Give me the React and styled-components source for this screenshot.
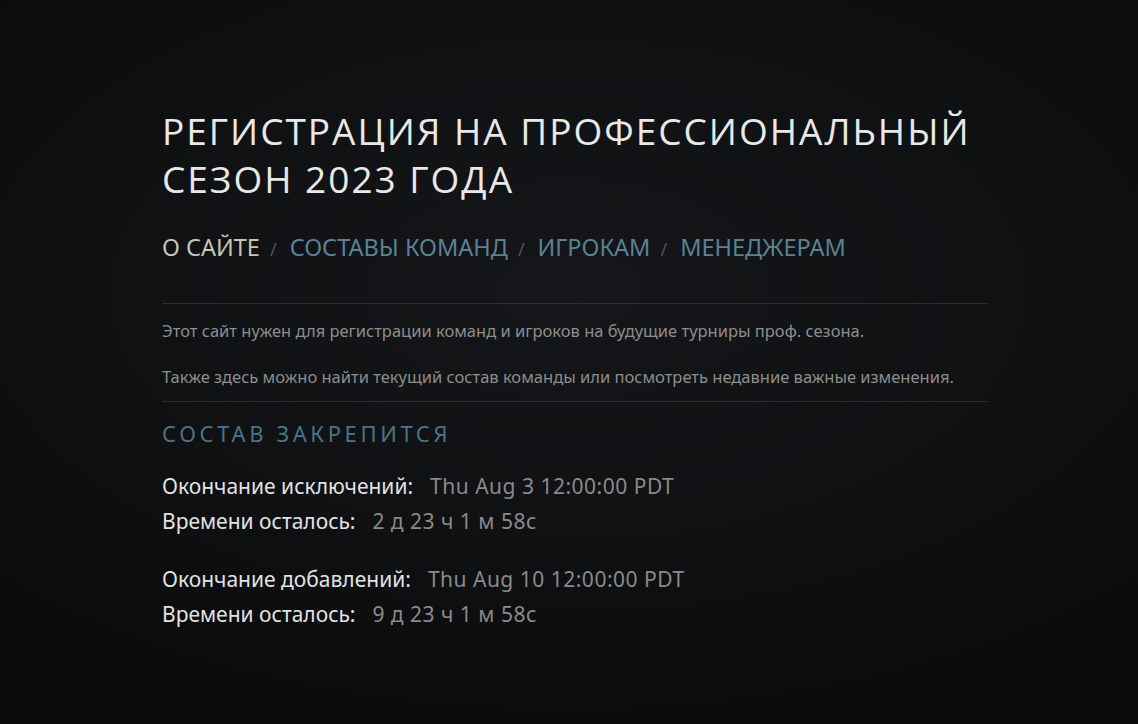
import React from 'react'
import styled, { createGlobalStyle } from 'styled-components'

const GlobalStyle = createGlobalStyle`
  html, body {
    margin: 0;
    padding: 0;
    height: 100%;
  }
  body {
    background: #0b0c0e;
    font-family: "Noto Sans", "Open Sans", sans-serif;
  }
`

const Page = styled.div`
  min-height: 724px;
  box-sizing: border-box;
  padding: 107px 0 0 162px;
  background:
    radial-gradient(ellipse 70% 60% at 50% 40%, #141619 0%, #0f1113 55%, #0a0b0c 100%);
`

const Content = styled.div`
  width: 825px;
`

const Title = styled.h1`
  margin: 0;
  font-family: "Open Sans", sans-serif;
  font-weight: 400;
  font-size: 37px;
  line-height: 48px;
  letter-spacing: 2px;
  color: #e8e8e8;
`

const Nav = styled.nav`
  display: flex;
  align-items: baseline;
  margin-top: 29px;
  font-family: "Noto Sans", sans-serif;
  font-size: 23.5px;
  line-height: 30px;
`

const NavLink = styled.a`
  color: ${p => (p.$active ? '#c9c4b4' : '#5a8296')};
  text-decoration: none;
`

const Slash = styled.span`
  color: #505458;
  font-size: 18px;
  margin: 0 13px 0 10px;
`

const Divider = styled.hr`
  border: 0;
  border-top: 1px solid #2a2d31;
  margin: ${p => p.$top || 0}px 0 0;
`

const Text = styled.p`
  margin: ${p => p.$top}px 0 0;
  font-size: 16.5px;
  line-height: 22px;
  color: #8d8d8d;
`

const Section = styled.h2`
  margin: 16px 0 0;
  font-weight: 400;
  font-size: 22px;
  line-height: 30px;
  letter-spacing: 3.6px;
  color: #4b7487;
`

const Group = styled.div`
  margin-top: ${p => p.$top}px;
`

const Row = styled.div`
  font-size: 21px;
  line-height: 35px;
  color: #e2e2e2;
`

const Value = styled.span`
  color: #8a8a8a;
  margin-left: 17px;
  letter-spacing: 0.5px;
`

const deadlines = [
  { label: 'Окончание исключений:', date: 'Thu Aug 3 12:00:00 PDT', left: '2 д 23 ч 1 м 58с' },
  { label: 'Окончание добавлений:', date: 'Thu Aug 10 12:00:00 PDT', left: '9 д 23 ч 1 м 58с' },
]

const links = ['СОСТАВЫ КОМАНД', 'ИГРОКАМ', 'МЕНЕДЖЕРАМ']

export default function App() {
  return (
    <Page>
      <GlobalStyle />
      <Content>
        <Title>
          РЕГИСТРАЦИЯ НА ПРОФЕССИОНАЛЬНЫЙ<br />СЕЗОН 2023 ГОДА
        </Title>
        <Nav>
          <NavLink $active href="#">О САЙТЕ</NavLink>
          {links.map(l => (
            <React.Fragment key={l}>
              <Slash>/</Slash>
              <NavLink href="#">{l}</NavLink>
            </React.Fragment>
          ))}
        </Nav>
        <Divider $top={39} />
        <Text $top={16}>Этот сайт нужен для регистрации команд и игроков на будущие турниры проф. сезона.</Text>
        <Text $top={24}>Также здесь можно найти текущий состав команды или посмотреть недавние важные изменения.</Text>
        <Divider $top={13} />
        <Section>СОСТАВ ЗАКРЕПИТСЯ</Section>
        {deadlines.map((d, i) => (
          <Group key={d.label} $top={i === 0 ? 21 : 23}>
            <Row>{d.label}<Value>{d.date}</Value></Row>
            <Row>Времени осталось:<Value>{d.left}</Value></Row>
          </Group>
        ))}
      </Content>
    </Page>
  )
}
